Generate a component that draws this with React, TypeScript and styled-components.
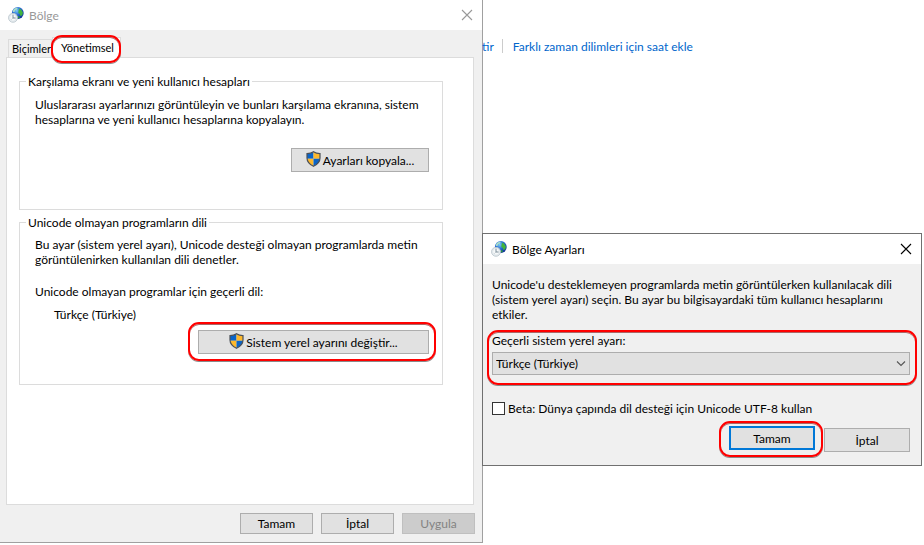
import React from "react";
import styled, { createGlobalStyle, css } from "styled-components";

const GlobalStyle = createGlobalStyle`
  *, *::before, *::after { box-sizing: border-box; }
  body {
    margin: 0;
    background: #fff;
    color: #000;
    font: 12px/15px Lato, "Open Sans", sans-serif;
  }
  button, input, select { font: inherit; color: inherit; }
`;

const Desktop = styled.main`
  display: grid;
  grid-template-columns: minmax(0, 482fr) minmax(0, 440fr);
  padding-right: 2px;
  min-height: 100vh;
  align-items: start;
`;

const RegionWindow = styled.section`
  display: flex;
  flex-direction: column;
  min-height: calc(100vh - 2px);
  margin-right: -1px;
  background: #f0f0f0;
  border: solid #a0a0a0;
  border-width: 0 1px 1px 0;
  position: relative;
`;

const TitleBar = styled.header<{ $inactive?: boolean }>`
  display: flex;
  align-items: center;
  height: 30px;
  padding: 0 9px 0 8px;
  background: #fff;
  color: ${(p) => (p.$inactive ? "#999" : "#000")};
`;

const TitleText = styled.h1`
  flex: 1;
  margin: 0 0 0 5px;
  font: inherit;
`;

const CloseButton = styled.button`
  display: flex;
  padding: 0;
  border: 0;
  background: none;
`;

const Highlight = styled.div<{ $inset: string }>`
  position: relative;
  &::after {
    content: "";
    position: absolute;
    inset: ${(p) => p.$inset};
    border: 2px solid #f00;
    border-radius: 11px;
    box-shadow: 0 1px 0 #8a8a8a, inset 0 1px 0 #a66;
    pointer-events: none;
    z-index: 2;
  }
`;

const TabList = styled.div`
  display: flex;
  align-items: flex-end;
  height: 27px;
  padding-left: 8px;
`;

const Tab = styled.button<{ $active?: boolean }>`
  display: block;
  border: 1px solid #dcdcdc;
  border-bottom: 0;
  font-size: 11px;
  white-space: nowrap;
  ${(p) =>
    p.$active
      ? css`
          width: 69px;
          height: 21px;
          padding: 0 0 2px 2px;
          background: #fff;
        `
      : css`
          width: 44px;
          height: 18px;
          padding: 0 0 0 3px;
          text-align: left;
          background: #f0f0f0;
        `}
`;

const ActiveTabWrap = styled(Highlight)`
  margin-bottom: -1px;
  z-index: 1;
`;

const TabPanel = styled.div`
  flex: 1;
  margin: 0 8px 0 6px;
  padding: 16px 30px 16px 12px;
  background: #fff;
  border: 1px solid #dcdcdc;
`;

const Group = styled.fieldset<{ $top: number; $bottom: number }>`
  min-width: 0;
  margin: 0 0 5px;
  padding: ${(p) => p.$top}px 13px ${(p) => p.$bottom}px 15px;
  border: 1px solid #dcdcdc;
`;

const Legend = styled.legend`
  margin-left: -9px;
  padding: 0 2px;
`;

const Text = styled.p<{ $top?: number; $indent?: number }>`
  margin: ${(p) => p.$top ?? 0}px 0 0 ${(p) => p.$indent ?? 0}px;
`;

const ActionRow = styled.div<{ $top: number }>`
  display: flex;
  justify-content: flex-end;
  margin-top: ${(p) => p.$top}px;
`;

const Button = styled.button<{ $width: number; $tall?: boolean; $primary?: boolean }>`
  display: flex;
  align-items: center;
  justify-content: center;
  gap: 2px;
  width: ${(p) => p.$width}px;
  height: ${(p) => (p.$tall ? 24 : 21)}px;
  padding: 0;
  background: #e1e1e1;
  border: ${(p) => (p.$primary ? "2px solid #0078d7" : "1px solid #adadad")};
  white-space: nowrap;
  svg { margin-bottom: 2px; }
  &:disabled {
    background: #ccc;
    border-color: #bfbfbf;
    color: #838383;
  }
`;

const Footer = styled.footer`
  display: flex;
  justify-content: flex-end;
  gap: 8px;
  padding: 8px 7px 8px;
`;

const RightSide = styled.div`
  position: relative;
`;

const LinkBar = styled.nav`
  display: flex;
  align-items: flex-start;
  height: 233px;
  padding-top: 39px;
`;

const Link = styled.a<{ $first?: boolean }>`
  color: #0066cc;
  text-decoration: none;
  white-space: nowrap;
  padding-left: ${(p) => (p.$first ? 0 : 10)}px;
  margin-right: ${(p) => (p.$first ? 8 : 0)}px;
`;

const Divider = styled.span`
  width: 1px;
  height: 14px;
  background: #ccc;
`;

const SettingsDialog = styled.section`
  background: #f0f0f0;
  border: 1px solid #707070;
`;

const DialogBody = styled.div`
  padding: 13px 11px 13px 9px;
`;

const LocaleField = styled(Highlight)`
  margin-top: 11px;
  label { display: block; }
`;

const SelectBox = styled.div`
  position: relative;
  margin-top: 4px;
  svg {
    position: absolute;
    right: 4px;
    top: 8px;
    pointer-events: none;
  }
`;

const Select = styled.select`
  display: block;
  width: 100%;
  height: 23px;
  padding: 0 3px;
  appearance: none;
  border: 1px solid #adadad;
  border-radius: 0;
  background: #e1e1e1;
`;

const CheckRow = styled.label`
  display: flex;
  align-items: center;
  gap: 3px;
  margin-top: 26px;
`;

const CheckBox = styled.input`
  appearance: none;
  width: 13px;
  height: 13px;
  margin: 0;
  background: #fff;
  border: 1px solid #333;
`;

const DialogActions = styled.div`
  display: flex;
  justify-content: flex-end;
  align-items: flex-start;
  gap: 9px;
  margin-top: 10px;
  > button { margin-top: 2px; }
`;

const Globe = ({ id }: { id: string }) => (
  <svg width="16" height="16" viewBox="0 0 16 16" aria-hidden="true">
    <defs>
      <radialGradient id={id} cx="0.4" cy="0.3" r="0.75">
        <stop offset="0" stopColor="#7cc8f5" />
        <stop offset="0.5" stopColor="#2469cf" />
        <stop offset="1" stopColor="#0b2a8c" />
      </radialGradient>
    </defs>
    <circle cx="9.8" cy="6" r="5.9" fill={`url(#${id})`} />
    <path d="M5 3.5C6 1.5 8 .5 9.800 .8L9 2.500 7.200 3.200 6.500 5 5 5z" fill="#a8dcc8" />
    <path d="M11.200 1.600l2 1.200 1.700 2.600-.6 2.900-1.900.6-.6-2.200-1.500-.8.2-2z" fill="#43b53c" />
    <path d="M9.500 9l2 .4.3 1.400-1.600.6z" fill="#2f9d3c" />
    <circle cx="5" cy="10.800" r="4.500" fill="#e7edf0" stroke="#b9c4cb" strokeWidth="0.8" />
    <circle cx="5" cy="10.800" r="3.300" fill="#f6f9fa" stroke="#d3dbe0" strokeWidth="0.5" />
    <path d="M5 7.800v3.200h2.600" fill="none" stroke="#71818e" strokeWidth="0.9" />
    <path d="M5 11l-1.600 1.600" stroke="#9aa7b0" strokeWidth="0.6" />
  </svg>
);

const Shield = () => (
  <svg width="15" height="16" viewBox="0 0 15 16" aria-hidden="true">
    <path d="M7.5 .7C5.8 1.9 3.5 2.6 1 2.6V7.800h6.500z" fill="#0a64c8" />
    <path d="M7.500 .7C9.200 1.900 11.500 2.600 14 2.600V7.800H7.500z" fill="#fdb82c" />
    <path d="M1 7.800h6.500v7.500C4.200 13.500 1.300 11.500 1 7.800z" fill="#fdb82c" />
    <path d="M7.500 7.800H14c-.3 3.700-3.200 5.700-6.500 7.500z" fill="#0a64c8" />
    <path
      d="M7.500 .7C5.800 1.900 3.500 2.600 1 2.600V7c0 4 2.800 6.500 6.500 8.300C11.200 13.500 14 11 14 7V2.600C11.500 2.600 9.200 1.900 7.500 .7z"
      fill="none"
      stroke="#4c5158"
      strokeWidth="1.2"
    />
  </svg>
);

const Cross = () => (
  <svg width="12" height="12" viewBox="0 0 12 12" aria-hidden="true">
    <path d="M1 1l10 10M11 1L1 11" stroke="currentColor" strokeWidth="1.1" />
  </svg>
);

const Chevron = () => (
  <svg width="10" height="7" viewBox="0 0 10 7" aria-hidden="true">
    <path d="M1 1.5l4 4 4-4" fill="none" stroke="#555" strokeWidth="1.1" />
  </svg>
);

export default function App() {
  return (
    <>
      <GlobalStyle />
      <Desktop>
        <RegionWindow>
          <TitleBar $inactive>
            <Globe id="globe-region" />
            <TitleText>Bölge</TitleText>
            <CloseButton aria-label="Kapat"><Cross /></CloseButton>
          </TitleBar>
          <TabList role="tablist">
            <Tab role="tab" aria-selected="false">Biçimler</Tab>
            <ActiveTabWrap $inset="-2px 0 -5px -1px">
              <Tab $active role="tab" aria-selected="true">Yönetimsel</Tab>
            </ActiveTabWrap>
          </TabList>
          <TabPanel role="tabpanel">
            <Group $top={8} $bottom={37}>
              <Legend>Karşılama ekranı ve yeni kullanıcı hesapları</Legend>
              <Text>
                Uluslararası ayarlarınızı görüntüleyin ve bunları karşılama ekranına, sistem
                hesaplarına ve yeni kullanıcı hesaplarına kopyalayın.
              </Text>
              <ActionRow $top={21}>
                <Button $width={138} $tall><Shield />Ayarları kopyala...</Button>
              </ActionRow>
            </Group>
            <Group $top={7} $bottom={30}>
              <Legend>Unicode olmayan programların dili</Legend>
              <Text>
                Bu ayar (sistem yerel ayarı), Unicode desteği olmayan programlarda metin
                görüntülenirken kullanılan dili denetler.
              </Text>
              <Text $top={17}>Unicode olmayan programlar için geçerli dil:</Text>
              <Text $top={8} $indent={19}>Türkçe (Türkiye)</Text>
              <ActionRow $top={8}>
                <Highlight $inset="-8px -7px -7px -10px">
                  <Button $width={231} $tall><Shield />Sistem yerel ayarını değiştir...</Button>
                </Highlight>
              </ActionRow>
            </Group>
          </TabPanel>
          <Footer>
            <Button $width={73}>Tamam</Button>
            <Button $width={73}>İptal</Button>
            <Button $width={73} disabled>Uygula</Button>
          </Footer>
        </RegionWindow>

        <RightSide>
          <LinkBar>
            <Link $first href="#degistir">tir</Link>
            <Divider />
            <Link href="#saat-ekle">Farklı zaman dilimleri için saat ekle</Link>
          </LinkBar>
          <SettingsDialog role="dialog" aria-label="Bölge Ayarları">
            <TitleBar>
              <Globe id="globe-settings" />
              <TitleText>Bölge Ayarları</TitleText>
              <CloseButton aria-label="Kapat"><Cross /></CloseButton>
            </TitleBar>
            <DialogBody>
              <Text>
                Unicode'u desteklemeyen programlarda metin görüntülerken kullanılacak dili
                (sistem yerel ayarı) seçin. Bu ayar bu bilgisayardaki tüm kullanıcı hesaplarını
                etkiler.
              </Text>
              <LocaleField $inset="-3px -7px -10px -5px">
                <label htmlFor="locale">Geçerli sistem yerel ayarı:</label>
                <SelectBox>
                  <Select id="locale" defaultValue="tr">
                    <option value="tr">Türkçe (Türkiye)</option>
                  </Select>
                  <Chevron />
                </SelectBox>
              </LocaleField>
              <CheckRow>
                <CheckBox type="checkbox" />
                Beta: Dünya çapında dil desteği için Unicode UTF-8 kullan
              </CheckRow>
              <DialogActions>
                <Highlight $inset="-5px -8px -7px -10px">
                  <Button $width={86} $tall $primary>Tamam</Button>
                </Highlight>
                <Button $width={86} $tall>İptal</Button>
              </DialogActions>
            </DialogBody>
          </SettingsDialog>
        </RightSide>
      </Desktop>
    </>
  );
}
